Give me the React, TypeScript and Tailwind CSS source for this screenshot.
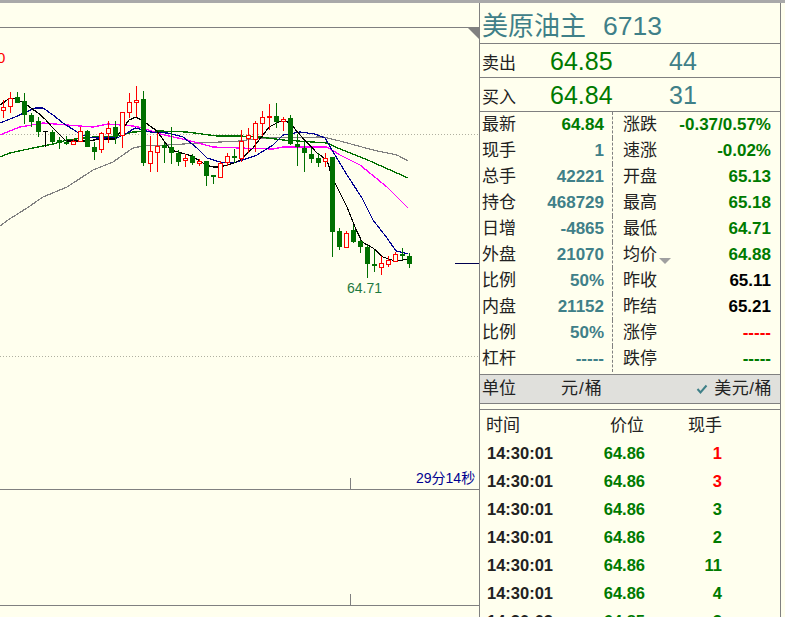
const candles: [number, number, number, number, number, "r" | "g" | "k"][] = [
  [3, 100, 118, 107, 110, "r"], [10, 92, 113, 98, 106, "r"], [17, 92, 103, 97, 103, "g"], [24, 93, 124, 101, 115, "g"],
  [31, 113, 127, 115, 122, "g"], [38, 117, 137, 121, 132, "g"], [45, 131, 147, 131, 131, "k"], [52, 130, 145, 132, 142, "g"],
  [59, 137, 149, 140, 143, "g"], [66, 136, 145, 142, 144, "g"], [73, 139, 145, 141, 144, "r"], [80, 127, 142, 131, 141, "r"],
  [87, 130, 147, 131, 147, "g"], [94, 142, 160, 147, 152, "g"], [101, 132, 153, 133, 149, "r"], [108, 121, 143, 128, 133, "r"],
  [115, 121, 144, 127, 137, "g"], [122, 112, 148, 112, 135, "r"], [129, 93, 118, 102, 112, "r"], [136, 86, 117, 100, 102, "r"],
  [143, 91, 166, 99, 163, "g"], [150, 136, 172, 151, 163, "r"], [157, 133, 172, 146, 152, "r"], [164, 143, 163, 145, 148, "g"],
  [171, 127, 164, 147, 153, "g"], [178, 150, 166, 153, 162, "g"], [185, 154, 167, 158, 160, "r"], [192, 154, 165, 156, 163, "g"],
  [199, 159, 166, 161, 163, "r"], [206, 161, 186, 161, 176, "g"], [213, 175, 184, 175, 177, "g"], [220, 161, 178, 163, 177, "r"],
  [227, 153, 166, 156, 162, "r"], [234, 149, 163, 156, 158, "g"], [241, 130, 162, 141, 158, "r"], [248, 128, 153, 135, 138, "r"],
  [255, 121, 152, 123, 139, "r"], [262, 111, 136, 117, 123, "r"], [269, 104, 130, 116, 117, "r"], [276, 103, 128, 116, 122, "g"],
  [283, 117, 131, 119, 121, "r"], [290, 115, 145, 118, 144, "g"], [297, 134, 166, 144, 147, "g"], [304, 142, 172, 148, 153, "g"],
  [311, 148, 163, 154, 159, "g"], [318, 153, 167, 158, 163, "g"], [325, 153, 167, 158, 161, "r"], [332, 157, 257, 157, 232, "g"],
  [339, 228, 250, 231, 247, "g"], [346, 231, 248, 233, 247, "r"], [353, 225, 243, 230, 242, "g"], [360, 240, 253, 241, 247, "g"],
  [367, 245, 278, 247, 264, "g"], [374, 250, 272, 264, 266, "g"], [381, 256, 275, 263, 267, "r"], [388, 256, 267, 260, 264, "r"],
  [395, 252, 262, 254, 261, "r"], [402, 248, 260, 254, 256, "g"], [409, 253, 268, 256, 264, "g"],
];

const lines = [
  { color: "#808080", w: 1.2, pts: "0,226 8,220 27,208 43,197 67,187 93,170 113,162 133,148 143,146 167,145 200,143 240,141 260,138 323,137 340,141 373,150 397,155 408,161" },
  { color: "#007000", w: 1.3, pts: "0,157 10,153 33,148 53,144 67,140 93,137 117,136 133,132 160,131 187,132 217,136 240,136 260,137 283,140 327,143 340,149 370,161 408,178" },
  { color: "#ff00ff", w: 1.3, pts: "0,135 20,127 43,123 67,125 93,127 108,124 133,126 143,128 160,134 187,140 213,147 240,148 273,149 283,147 327,147 340,155 360,165 387,187 408,208" },
  { color: "#000090", w: 1.2, pts: "0,123 15,117 24,113 35,108 43,108 53,115 63,123 77,132 87,137 97,138 117,138 127,133 135,128 143,130 150,132 167,133 183,137 197,148 207,158 220,162 233,163 240,161 257,155 273,145 283,135 300,132 315,134 325,138 335,155 347,175 362,198 373,220 387,238 396,251 408,254" },
  { color: "#000000", w: 1.2, pts: "0,105 7,100 14,98 24,103 31,108 38,113 45,119 52,127 59,134 66,141 73,141 87,141 94,140 108,139 115,139 122,130 129,120 136,117 143,121 150,126 157,131 164,141 171,150 178,152 192,156 206,165 213,167 220,167 234,163 240,160 253,148 269,127 283,120 290,123 300,135 317,153 327,160 332,177 340,193 347,207 355,227 362,242 373,248 383,257 395,261 410,259" },
];

const stats = [
  ["最新", "64.84", "text-[#007a00]", "涨跌", "-0.37/0.57%", "text-[#007a00]"],
  ["现手", "1", "text-[#3f8088]", "速涨", "-0.02%", "text-[#007a00]"],
  ["总手", "42221", "text-[#3f8088]", "开盘", "65.13", "text-[#007a00]"],
  ["持仓", "468729", "text-[#3f8088]", "最高", "65.18", "text-[#007a00]"],
  ["日增", "-4865", "text-[#3f8088]", "最低", "64.71", "text-[#007a00]"],
  ["外盘", "21070", "text-[#3f8088]", "均价", "64.88", "text-[#007a00]"],
  ["比例", "50%", "text-[#3f8088]", "昨收", "65.11", "text-black"],
  ["内盘", "21152", "text-[#3f8088]", "昨结", "65.21", "text-black"],
  ["比例", "50%", "text-[#3f8088]", "涨停", "-----", "text-[#ff0000]"],
  ["杠杆", "-----", "text-[#3f8088]", "跌停", "-----", "text-[#007a00]"],
];

const ticks = [
  ["14:30:01", "64.86", "1", "text-[#ff0000]"],
  ["14:30:01", "64.86", "3", "text-[#ff0000]"],
  ["14:30:01", "64.86", "3", "text-[#007a00]"],
  ["14:30:01", "64.86", "2", "text-[#007a00]"],
  ["14:30:01", "64.86", "11", "text-[#007a00]"],
  ["14:30:01", "64.86", "4", "text-[#007a00]"],
  ["14:30:03", "64.85", "3", "text-[#007a00]"],
];

const Chart = () => (
  <svg width="479" height="461" viewBox="0 28 479 461" className="block">
    <line x1="0" y1="134.5" x2="479" y2="134.5" stroke="#b0b0a0" strokeDasharray="1 2" />
    <line x1="0" y1="356.5" x2="479" y2="356.5" stroke="#b0b0a0" strokeDasharray="1 2" />
    {lines.map((l) => (
      <polyline key={l.color} points={l.pts} fill="none" stroke={l.color} strokeWidth={l.w} shapeRendering="crispEdges" />
    ))}
    {candles.map(([x, hi, lo, top, bot, c], i) => {
      const col = c === "r" ? "#ff0000" : c === "g" ? "#007000" : "#000000";
      return (
        <g key={i} shapeRendering="crispEdges">
          <line x1={x + 0.5} y1={hi} x2={x + 0.5} y2={lo} stroke={col} />
          {c === "r" ? (
            <rect x={x - 1.5} y={top + 0.5} width="4" height={Math.max(bot - top, 1)} fill="#ffffee" stroke={col} />
          ) : (
            <rect x={x - 2} y={top} width="5" height={Math.max(bot - top, 1)} fill={col} />
          )}
        </g>
      );
    })}
    <text x="-3" y="63" fontSize="15" fill="#ff0000" fontFamily="Liberation Sans, sans-serif">0</text>
    <text x="347" y="293" fontSize="14" fill="#1f7a40" fontFamily="Liberation Sans, sans-serif">64.71</text>
    <line x1="455" y1="263.5" x2="479" y2="263.5" stroke="#000050" />
    <polygon points="468,28 479,28 479,39" fill="#808080" />
    <line x1="350.5" y1="478" x2="350.5" y2="489" stroke="#808080" />
    <text x="416" y="483" fontSize="14" fill="#000090" fontFamily="Liberation Sans, Noto Sans CJK SC, sans-serif">29分14秒</text>
  </svg>
);

export default function App() {
  return (
    <div className="w-[785px] h-[617px] overflow-hidden bg-[#ffffee] border-t-[3px] border-[#a9a9a9] flex text-[#222] font-['Liberation_Sans','Noto_Sans_CJK_SC',sans-serif]">
      <div className="w-[479px] shrink-0 flex flex-col">
        <div className="h-[25px] border-b border-[#808080] shrink-0" />
        <Chart />
        <div className="h-[117px] border-y border-[#808080] shrink-0 flex flex-col justify-end">
          <div className="ml-[350px] w-px h-[11px] bg-[#808080]" />
        </div>
      </div>
      <div className="w-[302px] shrink-0 border-l border-r border-[#808080] flex flex-col">
        <div className="h-[41px] shrink-0 flex items-center gap-[17px] pl-[2px] pt-[7px] text-[26px] text-[#3f8088] border-b border-[#808080]">
          <span>美原油主</span>
          <span className="text-[26.5px]">6713</span>
        </div>
        <div className="h-[34px] shrink-0 flex items-center border-b border-[#808080] pl-[2px]">
          <span className="w-[68px] text-[17px] pt-[7px]">卖出</span>
          <span className="w-[119px] text-[25px] text-[#007a00] pt-[2px]">64.85</span>
          <span className="text-[25px] text-[#3f8088] pt-[2px]">44</span>
        </div>
        <div className="h-[34px] shrink-0 flex items-center border-b border-[#808080] pl-[2px]">
          <span className="w-[68px] text-[17px] pt-[7px]">买入</span>
          <span className="w-[119px] text-[25px] text-[#007a00] pt-[2px]">64.84</span>
          <span className="text-[25px] text-[#3f8088] pt-[2px]">31</span>
        </div>
        <div className="h-[263px] shrink-0 flex flex-col border-b border-[#808080]">
          {stats.map((s, i) => (
            <div key={i} className="h-[26px] flex items-center">
              <div className="w-[133px] h-full flex items-center justify-between pl-[2px] pr-[8px] border-r border-dashed border-[#808080]">
                <span className="text-[17px]">{s[0]}</span>
                <span className={`text-[17px] font-bold ${s[2]}`}>{s[1]}</span>
              </div>
              <div className="flex-1 h-full flex items-center justify-between pl-[10px] pr-[9px]">
                <span className="text-[17px] relative">
                  {s[3]}
                  {s[3] === "均价" && <span className="absolute left-[36px] top-[16px] w-0 h-0 border-x-[6px] border-t-[6px] border-x-transparent border-t-[#a0a0a0]" />}
                </span>
                <span className={`text-[17px] font-bold ${s[5]}`}>{s[4]}</span>
              </div>
            </div>
          ))}
        </div>
        <div className="h-[29px] shrink-0 flex items-center bg-[#e0e0dc] border-b border-[#808080] pl-[2px] pr-[8px] text-[17px]">
          <span className="w-[79px]">单位</span>
          <span className="tracking-[1px]">元/桶</span>
          <svg width="12" height="12" viewBox="0 0 12 12" className="ml-auto mr-[6px]">
            <path d="M1.5 6 L4.5 9.5 L10.5 2.5" fill="none" stroke="#3f8088" strokeWidth="2" />
          </svg>
          <span className="tracking-[0.5px]">美元/桶</span>
        </div>
        <div className="h-[6px] shrink-0 border-b border-[#808080]" />
        <div className="flex flex-col">
          <div className="h-[29px] shrink-0 flex items-center text-[17px] pt-[2px]">
            <span className="w-[130px] pl-[6px]">时间</span>
            <span className="w-[78px]">价位</span>
            <span>现手</span>
          </div>
          {ticks.map((t, i) => (
            <div key={i} className="h-[28px] shrink-0 flex items-center text-[16.5px] font-bold">
              <span className="w-[107px] pl-[7px]">{t[0]}</span>
              <span className="w-[58px] text-right text-[#007a00]">{t[1]}</span>
              <span className={`w-[77px] text-right ${t[3]}`}>{t[2]}</span>
            </div>
          ))}
        </div>
      </div>
    </div>
  );
}
